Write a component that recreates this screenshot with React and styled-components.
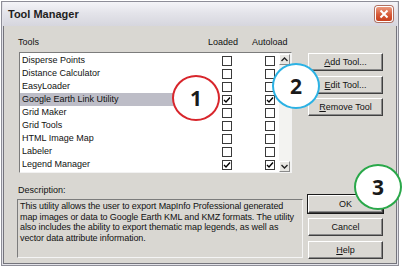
import React from "react";
import styled, { createGlobalStyle } from "styled-components";

const Global = createGlobalStyle`
  html, body { margin: 0; padding: 0; background: #ffffff; }
  body { font-family: "Liberation Sans", Arial, sans-serif; color: #111; }
  * { box-sizing: border-box; }
`;

const Stage = styled.div`
  position: relative;
  width: 408px;
  height: 268px;
  overflow: hidden;
`;

const Window = styled.div`
  margin: 1px 0 0 1px;
  width: 398px;
  height: 265px;
  border: 1px solid #8e8e98;
  background: #e2e2e8;
  padding: 0 1px 1px;
  display: flex;
  flex-direction: column;
`;

const TitleBar = styled.div`
  height: 24px;
  display: flex;
  align-items: center;
  justify-content: space-between;
  padding: 0 4px 0 5px;
  background: linear-gradient(#f4f4f8, #e4e4ea 45%, #d6d6de);
`;

const Title = styled.span`
  font-weight: bold;
  font-size: 11px;
  color: #1e1e1e;
`;

const CloseButton = styled.div`
  width: 18px;
  height: 16px;
  border: 1px solid #ffffff;
  border-radius: 3px;
  background: linear-gradient(#ec9a7e, #d65a38 55%, #c8401e);
  box-shadow: 0 0 0 1px #b07060;
  display: flex;
  align-items: center;
  justify-content: center;
`;

const Body = styled.div`
  flex: 1;
  background: #d9d7d2;
  border: 1px solid #74747c;
  border-top: 0;
  padding: 11px 13px 0 13px;
  display: grid;
  grid-template-columns: 286px 75px;
  column-gap: 5px;
  align-items: start;
`;

const LeftColumn = styled.div`
  display: flex;
  flex-direction: column;
`;

const HeaderRow = styled.div`
  display: grid;
  grid-template-columns: 190px 44px auto;
  height: 10px;
  padding-left: 1px;
  font-size: 9px;
  line-height: 10px;
`;

const Label = styled.div`
  font-size: 9px;
  line-height: 10px;
  height: 10px;
  padding-left: 1px;
  margin-top: ${(p) => p.$top || 0}px;
`;

const ListBox = styled.div`
  margin: 5px 0 0 2px;
  width: 273px;
  height: 121px;
  background: #ffffff;
  border-top: 1px solid #7c7c7c;
  border-left: 1px solid #7c7c7c;
  border-right: 1px solid #f2f2f2;
  border-bottom: 1px solid #f2f2f2;
  display: flex;
`;

const Rows = styled.div`
  flex: 1;
  padding-top: 1px;
`;

const Row = styled.div`
  display: grid;
  grid-template-columns: 202px 43px 1fr;
  height: 13px;
  align-items: center;
  font-size: 9px;
`;

const NameCell = styled.div`
  height: 13px;
  line-height: 13px;
  padding-left: 2px;
  width: 190px;
  white-space: nowrap;
  background: ${(p) => (p.$selected ? "#bdbdc7" : "transparent")};
`;

const Box = styled.div`
  width: 10px;
  height: 10px;
  border: 1px solid #3a3a3a;
  background: #ffffff;
  display: flex;
  align-items: center;
  justify-content: center;
`;

const ScrollBar = styled.div`
  width: 12px;
  display: flex;
  flex-direction: column;
  background: #f3f3f1;
  padding-top: 1px;
`;

const ScrollButton = styled.div`
  width: 11px;
  height: 11px;
  background: #e8e7e3;
  border-top: 1px solid #ffffff;
  border-left: 1px solid #ffffff;
  border-right: 1px solid #8a8a8a;
  border-bottom: 1px solid #8a8a8a;
  display: flex;
  align-items: center;
  justify-content: center;
`;

const Track = styled.div`
  flex: 1;
`;

const DescBox = styled.div`
  margin-top: 4px;
  width: 286px;
  height: 59px;
  border-top: 1px solid #7c7c7c;
  border-left: 1px solid #7c7c7c;
  border-right: 1px solid #f4f4f4;
  border-bottom: 1px solid #f4f4f4;
  padding: 1px 2px;
  font-size: 9px;
  line-height: 10.5px;
  letter-spacing: -0.1px;
`;

const RightColumn = styled.div`
  display: flex;
  flex-direction: column;
  padding-top: 16px;
`;

const ButtonGroup = styled.div`
  display: flex;
  flex-direction: column;
  gap: ${(p) => p.$gap}px;
  margin-top: ${(p) => p.$top || 0}px;
`;

const Button = styled.div`
  height: 18px;
  width: 75px;
  background: #dad8d3;
  border-top: 1px solid #ffffff;
  border-left: 1px solid #ffffff;
  border-right: 1px solid #404040;
  border-bottom: 1px solid #404040;
  box-shadow: inset -1px -1px 0 #8a8a8a ${(p) => (p.$default ? ", 0 0 0 1px #1a1a1a" : "")};
  display: flex;
  align-items: center;
  justify-content: center;
  font-size: 9px;
  color: #111;
`;

const Key = styled.span`
  text-decoration: underline;
`;

const Marker = styled.div`
  position: absolute;
  left: ${(p) => p.$x}px;
  top: ${(p) => p.$y}px;
  width: 48px;
  height: 46px;
  border-radius: 50%;
  border: 2px solid ${(p) => p.$color};
  background: #ffffff;
  display: flex;
  align-items: center;
  justify-content: center;
  font-family: "Open Sans", "Noto Sans", sans-serif;
  font-weight: 700;
  font-size: 21px;
  line-height: 1;
  color: #1a1a1a;
`;

const Check = () => (
  <svg width="8" height="8" viewBox="0 0 8 8">
    <path d="M1 4 L3 6 L7 1.5" fill="none" stroke="#000" strokeWidth="1.4" />
  </svg>
);

const Arrow = ({ up }) => (
  <svg width="7" height="5" viewBox="0 0 7 5">
    <path
      d={up ? "M0.5 4 L3.5 1 L6.5 4" : "M0.5 1 L3.5 4 L6.5 1"}
      fill="none"
      stroke="#222"
      strokeWidth="1.4"
    />
  </svg>
);

const tools = [
  { name: "Disperse Points" },
  { name: "Distance Calculator" },
  { name: "EasyLoader" },
  { name: "Google Earth Link Utility", selected: true, loaded: true, auto: true },
  { name: "Grid Maker" },
  { name: "Grid Tools" },
  { name: "HTML Image Map" },
  { name: "Labeler" },
  { name: "Legend Manager", loaded: true, auto: true },
];

export default function App() {
  return (
    <Stage>
      <Global />
      <Window>
        <TitleBar>
          <Title>Tool Manager</Title>
          <CloseButton>
            <svg width="10" height="10" viewBox="0 0 10 10">
              <path d="M1.5 1.5 L8.5 8.5 M8.5 1.5 L1.5 8.5" stroke="#fff" strokeWidth="2" />
            </svg>
          </CloseButton>
        </TitleBar>
        <Body>
          <LeftColumn>
            <HeaderRow>
              <span>Tools</span>
              <span>Loaded</span>
              <span>Autoload</span>
            </HeaderRow>
            <ListBox>
              <Rows>
                {tools.map((t) => (
                  <Row key={t.name}>
                    <NameCell $selected={t.selected}>{t.name}</NameCell>
                    <Box>{t.loaded && <Check />}</Box>
                    <Box>{t.auto && <Check />}</Box>
                  </Row>
                ))}
              </Rows>
              <ScrollBar>
                <ScrollButton>
                  <Arrow up />
                </ScrollButton>
                <Track />
                <ScrollButton>
                  <Arrow />
                </ScrollButton>
              </ScrollBar>
            </ListBox>
            <Label $top={12}>Description:</Label>
            <DescBox>
              This utility allows the user to export MapInfo Professional generated map
              images or data to Google Earth KML and KMZ formats. The utility also includes
              the ability to export thematic map legends, as well as vector data attribute
              information.
            </DescBox>
          </LeftColumn>
          <RightColumn>
            <ButtonGroup $gap={4.5}>
              <Button>
                <Key>A</Key>dd Tool...
              </Button>
              <Button>
                <Key>E</Key>dit Tool...
              </Button>
              <Button>
                <Key>R</Key>emove Tool
              </Button>
            </ButtonGroup>
            <ButtonGroup $gap={5} $top={79}>
              <Button $default>OK</Button>
              <Button>Cancel</Button>
              <Button>
                <Key>H</Key>elp
              </Button>
            </ButtonGroup>
          </RightColumn>
        </Body>
      </Window>
      <Marker $x={172} $y={75} $color="#d8262c">1</Marker>
      <Marker $x={272} $y={63} $color="#2cb2e4">2</Marker>
      <Marker $x={354} $y={164} $color="#2aa84a">3</Marker>
    </Stage>
  );
}
